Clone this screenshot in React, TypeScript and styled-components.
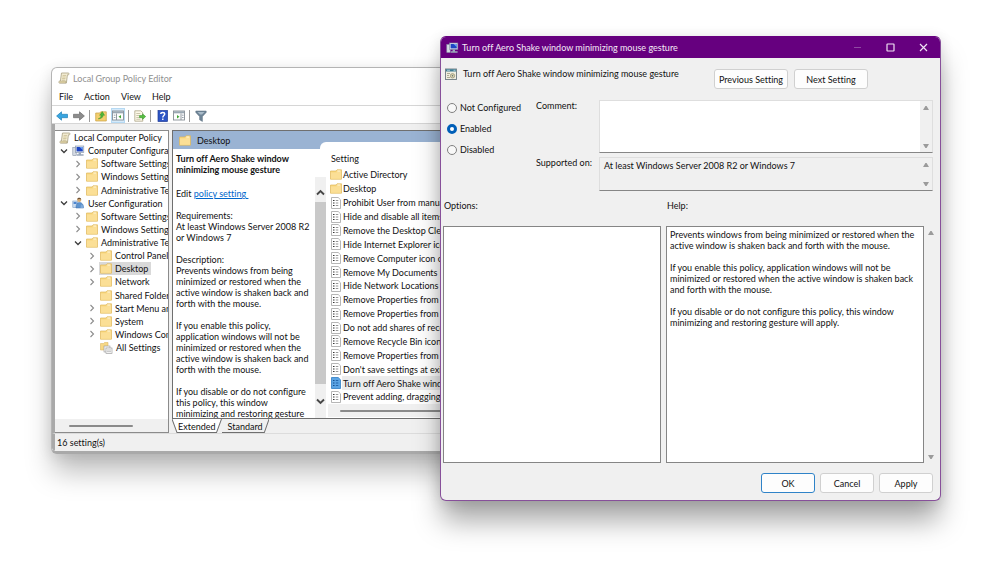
import React from 'react';
import styled, { createGlobalStyle } from 'styled-components';

const Global = createGlobalStyle`
  * { box-sizing: border-box; }
  body {
    margin: 0;
    background: #ffffff;
    color: #111111;
    font-family: Lato, "Open Sans", sans-serif;
    font-size: 9px;
    line-height: 11px;
    font-variant-ligatures: none;
    overflow: hidden;
  }
  button, textarea { font: inherit; font-variant-ligatures: none; color: inherit; }
  ul, h1, h2, p { margin: 0; padding: 0; list-style: none; font-size: inherit; font-weight: inherit; }
`;

const Desktop = styled.main`
  position: relative;
  min-height: 100vh;
`;

/* ---------- Group Policy Editor window ---------- */

const EditorWindow = styled.section`
  position: absolute;
  top: 67px;
  left: 51px;
  right: 20%;
  display: flex;
  flex-direction: column;
  background: #ffffff;
  border: 1px solid #b4b4b4;
  border-bottom: 3px solid #a9a9a9;
  border-radius: 6px;
  overflow: hidden;
  box-shadow: 0 20px 28px -2px rgba(0, 0, 0, 0.26), 0 2px 14px rgba(0, 0, 0, 0.1);
`;

const EditorTitle = styled.header`
  display: flex;
  align-items: center;
  gap: 3px;
  height: 20px;
  padding-left: 6px;
  color: #909090;
`;

const MenuBar = styled.nav`
  display: flex;
  height: 18px;
  padding-left: 7px;
  gap: 11px;
  border-bottom: 1px solid #d6d6d6;
`;

const MenuItem = styled.button`
  padding: 0;
  border: 0;
  background: none;
`;

const Toolbar = styled.div`
  display: flex;
  align-items: center;
  gap: 3px;
  height: 18px;
  padding: 2px 3px 0;
  border-bottom: 1px solid #d6d6d6;
`;

const ToolButton = styled.button<{ $on?: boolean }>`
  display: grid;
  place-items: center;
  width: 14px;
  height: 15px;
  padding: 0;
  border: 1px solid ${p => (p.$on ? '#b5d9f3' : 'transparent')};
  background: ${p => (p.$on ? '#d5eafa' : 'none')};
`;

const ToolDivider = styled.span`
  width: 1px;
  height: 12px;
  margin-right: 1px;
  background: #9b9b9b;
`;

const EditorBody = styled.div`
  display: flex;
  gap: 3px;
  height: 309px;
  padding-top: 6px;
  border-left: 3px solid #a9a9a9;
  background: #f0f0f0;
`;

const TreePane = styled.div`
  flex: 0 0 114px;
  display: flex;
  flex-direction: column;
  justify-content: space-between;
  overflow: hidden;
  background: #ffffff;
  border: solid #8b8b8b;
  border-width: 1px 1px 1px 0;
`;

const TreeList = styled.ul`
  display: flex;
  flex-direction: column;
  height: 223px;
`;

const TreeRow = styled.li<{ $depth: number }>`
  flex: 1;
  display: flex;
  align-items: center;
  gap: 3px;
  padding-left: ${p => (p.$depth === 0 ? 3 : p.$depth * 14 - 9)}px;
  white-space: nowrap;
`;

const Twisty = styled.span`
  display: flex;
  flex: none;
  width: 8px;
`;

const TreeLabel = styled.span<{ $selected?: boolean }>`
  display: flex;
  align-items: center;
  gap: 3px;
  height: 13px;
  padding: 0 3px 0 1px;
  background: ${p => (p.$selected ? '#d9d9d9' : 'none')};
  svg { flex: none; }
`;

const ScrollTrack = styled.div<{ $inset: number }>`
  display: flex;
  align-items: center;
  height: 13px;
  flex: none;
  padding-left: ${p => p.$inset}px;
  background: #f0f0f0;
`;

const ScrollLine = styled.span<{ $long?: boolean }>`
  width: ${p => (p.$long ? '80%' : '64px')};
  height: 2px;
  border-radius: 1px;
  background: #8a8a8a;
`;

const ResultPane = styled.div`
  flex: 1;
  min-width: 0;
  display: flex;
  flex-direction: column;
`;

const ResultView = styled.div`
  height: 289px;
  display: flex;
  flex-direction: column;
  border: solid #6f6f6f;
  border-width: 1px 0 1px 1px;
  background: #9ab3d3;
`;

const ResultTitle = styled.h2`
  flex: none;
  display: flex;
  align-items: center;
  gap: 6px;
  height: 18px;
  padding-left: 6px;
`;

const ResultColumns = styled.div`
  flex: 1;
  min-height: 0;
  display: flex;
  align-items: stretch;
  background: #ffffff;
`;

const Detail = styled.article`
  flex: 0 0 142px;
  padding: 4px 0 0 3px;
  overflow: hidden;
  white-space: pre;
  h2 { font-weight: 700; margin-bottom: 13px; }
  p { margin-bottom: 11px; }
`;

const PolicyLink = styled.a`
  color: #0066cc;
  text-decoration: underline;
`;

const VScroll = styled.div`
  position: relative;
  z-index: 1;
  flex: 0 0 11px;
  display: flex;
  flex-direction: column;
  margin-top: 28px;
  background: #f0f0f0;
`;

const ScrollButton = styled.button<{ $down?: boolean }>`
  display: grid;
  place-items: center;
  flex: none;
  height: ${p => (p.$down ? 34 : 25)}px;
  padding: ${p => (p.$down ? 0 : 5)}px 0 0;
  border: 0;
  background: none;
`;

const VThumb = styled.span`
  flex: 1;
  background: #c9c9c9;
`;

const SettingsCard = styled.div`
  flex: 1;
  min-width: 0;
  display: flex;
  flex-direction: column;
  margin: -7px 0 0 -6px;
  padding-left: 8px;
  background: #ffffff;
  border-top-left-radius: 6px;
`;

const SettingsHead = styled.h2`
  padding: 11px 0 4px 3px;
`;

const SettingsList = styled.ul`
  flex: none;
  display: flex;
  flex-direction: column;
  height: 236px;
`;

const SettingRow = styled.li<{ $selected?: boolean }>`
  flex: 1;
  display: flex;
  align-items: center;
  gap: 1px;
  padding-left: 2px;
  white-space: nowrap;
  background: linear-gradient(to right, transparent 14px, ${p => (p.$selected ? '#ececec' : 'transparent')} 14px);
  svg { flex: none; }
`;

const TabStrip = styled.div`
  display: flex;
  flex: 1;
`;

const TabButton = styled.button`
  position: relative;
  display: flex;
  align-items: center;
  padding: 0 6px;
  border: 0;
  background: none;
  svg { position: absolute; inset: 0; width: 100%; height: 100%; }
  span { position: relative; }
`;

const StatusBar = styled.footer`
  height: 18px;
  padding: 3px 0 0 2px;
  border-top: 1px solid #dcdcdc;
  border-left: 3px solid #a9a9a9;
  background: #f0f0f0;
`;

/* ---------- Policy dialog ---------- */

const Dialog = styled.section`
  position: absolute;
  top: 36px;
  left: 44%;
  right: 59px;
  background: #f0f0f0;
  border: 1px solid #87509a;
  border-top-color: #66007f;
  border-radius: 6px;
  overflow: hidden;
  box-shadow: 0 22px 28px -2px rgba(0, 0, 0, 0.34), 0 2px 14px rgba(0, 0, 0, 0.12);
`;

const DialogTitle = styled.header`
  display: flex;
  align-items: center;
  height: 21px;
  padding-left: 5px;
  color: #f4eaf6;
  background: #66007f;
  h1 { flex: 1; margin-left: 3px; }
`;

const CaptionButton = styled.button`
  display: grid;
  place-items: center;
  width: 33px;
  height: 21px;
  padding: 0;
  border: 0;
  background: none;
`;

const DialogBody = styled.form`
  padding: 0 7px 7px 2px;
`;

const NameRow = styled.div`
  display: flex;
  gap: 6px;
  height: 42px;
  padding: 10px 65px 11px 2px;
  h2 { flex: 1; }
`;

const PushButton = styled.button<{ $wide?: boolean; $primary?: boolean }>`
  align-self: flex-end;
  width: ${p => (p.$wide ? 74 : 54)}px;
  height: 20px;
  padding: 0;
  border: 1px solid ${p => (p.$primary ? '#2f83c8' : '#d0d0d0')};
  border-radius: 3px;
  background: #fdfdfd;
`;

const StateRow = styled.div`
  display: grid;
  grid-template-columns: 93px 63px 1fr;
`;

const RadioGroup = styled.div`
  display: flex;
  flex-direction: column;
  gap: 10px;
  padding: 2px 0 0 4px;
`;

const RadioLabel = styled.label`
  display: flex;
  align-items: center;
  gap: 3px;
`;

const Radio = styled.input`
  appearance: none;
  width: 10px;
  height: 10px;
  margin: 0;
  border: 1px solid #808080;
  border-radius: 50%;
  background: #f8f8f8;
  &:checked { border: 3px solid #005fb8; background: #ffffff; }
`;

const FieldStack = styled.div`
  display: flex;
  flex-direction: column;
  gap: 4px;
`;

const FieldLabels = styled.div`
  display: flex;
  flex-direction: column;
  gap: 46px;
`;

const Field = styled.div<{ $readOnly?: boolean }>`
  display: flex;
  height: ${p => (p.$readOnly ? 34 : 53)}px;
  border: 1px solid #dedede;
  border-bottom-color: #868686;
  background: ${p => (p.$readOnly ? '#f0f0f0' : '#ffffff')};
  textarea {
    flex: 1;
    min-width: 0;
    padding: 2px 4px;
    border: 0;
    outline: 0;
    resize: none;
    overflow: hidden;
    background: none;
  }
`;

const ArrowRail = styled.div`
  flex: none;
  display: flex;
  flex-direction: column;
  justify-content: space-between;
  align-items: center;
  width: 12px;
  padding: 4px 0 3px;
  background: #f0f0f0;
`;

const ArrowButton = styled.button`
  display: flex;
  padding: 0;
  border: 0;
  background: none;
`;

const PanelGrid = styled.div`
  display: grid;
  grid-template-columns: 218px 1fr 4px;
  column-gap: 5px;
  row-gap: 15px;
  padding-top: 9px;
  & > ${ArrowRail} { margin-left: -4px; }
`;

const PanelLabel = styled.h2`
  padding-left: 1px;
`;

const Panel = styled.div`
  height: 237px;
  padding: 2px 3px;
  border: 1px solid #858585;
  background: #ffffff;
  white-space: pre-line;
  p { margin-bottom: 11px; }
`;

const ButtonRow = styled.div`
  display: flex;
  justify-content: flex-end;
  gap: 5px;
  padding-top: 10px;
`;

/* ---------- Icons ---------- */

const FolderIcon = () => (
  <svg width="12" height="11" viewBox="0 0 12 11">
    <path d="M.5 2h5.500l1-1.200h4.500v9.400H.5z" fill="#f8d77f" stroke="#dfb75c" strokeWidth=".7" />
    <path d="M1 3.600h5.600l1.200-1.200H11v7.400H1z" fill="#fbdf96" />
    <path d="M7.300 2h3" stroke="#fff9e6" strokeWidth="1" />
  </svg>
);

const ScrollIcon = () => (
  <svg width="12" height="12" viewBox="0 0 12 12">
    <path d="M3.500 1h6.800c.8 0 1.200 1.600 0 1.800H9.400L8.400 11H1.600c-1.200 0-1-1.900 0-1.900h.8z" fill="#f5efd6" stroke="#a89f80" strokeWidth=".8" />
    <path d="M4.600 3.400h3.400M4.300 5h3.400M4.100 6.600h3.400M3.900 8.200h3" stroke="#b9a873" strokeWidth=".6" />
    <path d="M1.600 11h6.600c-.8-.5-.7-1.500 0-1.900H2" fill="#e2d5a5" stroke="#a89f80" strokeWidth=".5" />
  </svg>
);

const ComputerIcon = () => (
  <svg width="13" height="12" viewBox="0 0 13 12">
    <rect x=".8" y="2.500" width="3.400" height="8" fill="#d5dbe4" stroke="#8592a5" strokeWidth=".6" />
    <rect x="3.600" y="1" width="8.200" height="6.400" fill="#dfe5ee" stroke="#7f8ea3" strokeWidth=".6" />
    <rect x="4.600" y="2" width="6.200" height="4.400" fill="#1d45c4" />
    <path d="M7.500 2h3.300v3z" fill="#6fa2f3" />
    <path d="M6.600 7.400h2.400v1.800h2.600v1.500H4.800V9.200h1.800z" fill="#9aa8bb" />
  </svg>
);

const UserIcon = () => (
  <svg width="13" height="12" viewBox="0 0 13 12">
    <rect x=".8" y="4" width="4.600" height="6.500" fill="#c9dcf1" stroke="#7c9cc4" strokeWidth=".6" />
    <rect x="1.600" y="5" width="3" height="2" fill="#4d86cf" />
    <circle cx="7.200" cy="3" r="2.100" fill="#d6ab72" />
    <path d="M5.200 2.600c0-2.600 4-2.600 4 0-1.200-.9-2.600-.8-4 0z" fill="#6b4f33" />
    <path d="M4 11c0-4 1.500-5.500 3.500-5.500S11.500 7 11.500 11z" fill="#5c93cf" stroke="#3c6ca8" strokeWidth=".5" />
    <path d="M9 7.500l3 1.500-.6 2H8.500z" fill="#7fa9d8" />
  </svg>
);

const AllSettingsIcon = () => (
  <svg width="13" height="12" viewBox="0 0 13 12">
    <path d="M.5 1.500h3.200l.8-1H8v7.500H.5z" fill="#f7d885" stroke="#dcb968" strokeWidth=".6" />
    <rect x="4" y="4" width="6" height="6" fill="#f1f1f1" stroke="#9a9a9a" strokeWidth=".6" />
    <rect x="6" y="6" width="6" height="5.500" fill="#fdfdfd" stroke="#8f8f8f" strokeWidth=".6" />
    <path d="M7 8h4M7 9.700h4" stroke="#a5a5a5" strokeWidth=".7" />
  </svg>
);

const SettingIcon = ({ active }: { active?: boolean }) => (
  <svg width="12" height="12" viewBox="-1 0 12 12">
    <path d="M.5.5h6.700l2.300 2.300v8.700h-9z" fill={active ? '#5ba4e4' : '#ffffff'} stroke={active ? '#2f7cc4' : '#a3a3a3'} strokeWidth=".8" />
    <path d="M2 3.500h1.500M2 6h1.500M2 8.500h1.500" stroke={active ? '#174f8c' : '#333333'} strokeWidth="1.200" />
    <path d="M4.800 3.500h2.500M4.800 6h2.500M4.800 8.500h2.500" stroke={active ? '#1d5fa5' : '#8b8b8b'} strokeWidth=".9" />
  </svg>
);

const PolicyIcon = () => (
  <svg width="12" height="12" viewBox="0 0 12 12">
    <rect x=".5" y="1" width="11" height="10.500" fill="#f0eedf" stroke="#6d7a80" strokeWidth=".9" />
    <rect x="1" y="1.200" width="10" height="2.300" fill="#3e7c93" />
    <path d="M2 2.300h3M8.500 2.300h2" stroke="#d9ecf2" strokeWidth=".7" />
    <path d="M2 5.500h3M2 7.500h2M2 9.500h3" stroke="#9a9a80" strokeWidth=".8" />
    <circle cx="7.500" cy="7.800" r="2.200" fill="#d9d3ae" stroke="#8c8a70" strokeWidth=".7" />
    <circle cx="7.500" cy="7.800" r=".7" fill="#5b6b6e" />
  </svg>
);

const Chevron = ({ open }: { open?: boolean }) => (
  <svg width="8" height="8" viewBox="0 0 8 8" fill="none">
    {open
      ? <path d="M1 2.500l3 3 3-3" stroke="#3c3c3c" strokeWidth="1.300" />
      : <path d="M2.500 1l3 3-3 3" stroke="#8c8c8c" strokeWidth="1.100" />}
  </svg>
);

const ScrollChevron = ({ down }: { down?: boolean }) => (
  <svg width="9" height="7" viewBox="0 0 9 7" fill="none">
    <path d={down ? 'M1 1.500l3.500 3.500L8 1.500' : 'M1 5.500L4.500 2 8 5.500'} stroke="#484848" strokeWidth="1.900" />
  </svg>
);

const Triangle = ({ down }: { down?: boolean }) => (
  <svg width="8" height="6" viewBox="0 0 8 6">
    <path d={down ? 'M1 1h6L4.600 5H3.400z' : 'M1 5h6L4.600 1H3.400z'} fill="#9b9b9b" />
  </svg>
);

const ArrowIcon = ({ back }: { back?: boolean }) => (
  <svg width="12" height="10" viewBox="0 0 12 10">
    <path
      d={back ? 'M.6 5L5.500.8v2.500h6v3.400h-6v2.500z' : 'M11.400 5L6.500.8v2.500h-6v3.400h6v2.500z'}
      fill={back ? '#38a5e0' : '#8c8c8c'}
      stroke={back ? '#2181b9' : '#6f6f6f'}
      strokeWidth=".7"
    />
  </svg>
);

const FolderUpIcon = () => (
  <svg width="12" height="12" viewBox="0 0 12 12">
    <path d="M.7 3h4l1-1.200h5.600V11H.7z" fill="#f3cf6f" stroke="#c99f43" strokeWidth=".7" />
    <path d="M3.200 8.800c1.800-.5 2.700-1.700 2.900-3.500H4.600L7.300 1.600l2.300 3.700H8.200C8 7.600 6 9 3.200 8.800z" fill="#4fb53a" stroke="#2f8a22" strokeWidth=".4" />
  </svg>
);

const PanelsIcon = ({ right }: { right?: boolean }) => (
  <svg width="12" height="11" viewBox="0 0 12 11">
    <rect x=".5" y="1" width="11" height="9" fill="#fdfdfd" stroke="#868e96" strokeWidth=".9" />
    <rect x="1" y="1.300" width="10" height="2" fill="#9aa7b3" />
    <path d={right ? 'M8 3.500V10' : 'M4.500 3.500V10'} stroke="#868e96" strokeWidth=".9" />
    <path d={right ? 'M4 5l2.500 1.800L4 8.600z' : 'M9 5L6.500 6.800 9 8.600z'} fill="#3fa535" />
    <path d={right ? 'M9 5.200h1.600M9 7.500h1.600' : 'M1.800 5.200h1.600M1.800 7.500h1.600'} stroke="#7e8b99" strokeWidth=".8" />
  </svg>
);

const ExportIcon = () => (
  <svg width="12" height="12" viewBox="0 0 12 12">
    <path d="M.8.8h6l2 2v8.400h-8z" fill="#fbf8e8" stroke="#a39a78" strokeWidth=".7" />
    <path d="M2.300 3.500h4M2.300 5.500h3M2.300 7.500h3M2.300 9.300h4" stroke="#b7b091" strokeWidth=".7" />
    <path d="M5.500 5.500h3V3.800L11.700 6.600 8.500 9.400V7.700h-3z" fill="#56bf41" stroke="#2f8f25" strokeWidth=".5" />
  </svg>
);

const HelpIcon = () => (
  <svg width="11" height="12" viewBox="0 0 11 12" fill="none">
    <rect x="1" y=".5" width="9.500" height="11" fill="#2d55c5" stroke="#1d3a94" strokeWidth=".7" />
    <path d="M3.800 4.100c0-2.200 3.900-2.200 3.900 0 0 1.500-1.900 1.500-1.900 3.300M5.800 8.600v1.400" stroke="#ffffff" strokeWidth="1.400" />
  </svg>
);

const FunnelIcon = () => (
  <svg width="12" height="12" viewBox="0 0 12 12">
    <path d="M.8 1h10.400v1.400L7.400 6.600v4.800l-2.800-1.600V6.600L.8 2.400z" fill="#6f8597" stroke="#566b7d" strokeWidth=".5" />
    <path d="M2.500 2h7L7 4.500H5z" fill="#a8bac8" />
  </svg>
);

/* ---------- Data ---------- */

type Node = { label: string; depth: number; open?: boolean; leaf?: boolean; icon?: React.ReactNode; selected?: boolean };

const tree: Node[] = [
  { label: 'Computer Configuration', depth: 1, open: true, icon: <ComputerIcon /> },
  { label: 'Software Settings', depth: 2 },
  { label: 'Windows Settings', depth: 2 },
  { label: 'Administrative Templates', depth: 2 },
  { label: 'User Configuration', depth: 1, open: true, icon: <UserIcon /> },
  { label: 'Software Settings', depth: 2 },
  { label: 'Windows Settings', depth: 2 },
  { label: 'Administrative Templates', depth: 2, open: true },
  { label: 'Control Panel', depth: 3 },
  { label: 'Desktop', depth: 3, selected: true },
  { label: 'Network', depth: 3 },
  { label: 'Shared Folders', depth: 3, leaf: true },
  { label: 'Start Menu and Taskbar', depth: 3 },
  { label: 'System', depth: 3 },
  { label: 'Windows Components', depth: 3 },
  { label: 'All Settings', depth: 3, leaf: true, icon: <AllSettingsIcon /> },
];

const folders = ['Active Directory', 'Desktop'];

const settings = [
  'Prohibit User from manually redirecting Profile Folders',
  'Hide and disable all items on the desktop',
  'Remove the Desktop Cleanup Wizard',
  'Hide Internet Explorer icon on desktop',
  'Remove Computer icon on the desktop',
  'Remove My Documents icon on the desktop',
  'Hide Network Locations icon on desktop',
  'Remove Properties from the Computer icon context menu',
  'Remove Properties from the Documents icon context menu',
  'Do not add shares of recently opened documents',
  'Remove Recycle Bin icon from desktop',
  'Remove Properties from the Recycle Bin context menu',
  "Don't save settings at exit",
  'Turn off Aero Shake window minimizing mouse gesture',
  'Prevent adding, dragging, dropping and closing toolbars',
];

const ACTIVE = 'Turn off Aero Shake window minimizing mouse gesture';

const Rail = () => (
  <ArrowRail>
    <ArrowButton type="button" aria-label="Scroll up"><Triangle /></ArrowButton>
    <ArrowButton type="button" aria-label="Scroll down"><Triangle down /></ArrowButton>
  </ArrowRail>
);

const Editor = () => (
  <EditorWindow>
    <EditorTitle><ScrollIcon /><h1>Local Group Policy Editor</h1></EditorTitle>
    <MenuBar>
      {['File', 'Action', 'View', 'Help'].map(m => <MenuItem key={m}>{m}</MenuItem>)}
    </MenuBar>
    <Toolbar>
      <ToolButton aria-label="Back"><ArrowIcon back /></ToolButton>
      <ToolButton aria-label="Forward"><ArrowIcon /></ToolButton>
      <ToolDivider />
      <ToolButton aria-label="Up one level"><FolderUpIcon /></ToolButton>
      <ToolButton aria-label="Show console tree" $on><PanelsIcon /></ToolButton>
      <ToolDivider />
      <ToolButton aria-label="Export list"><ExportIcon /></ToolButton>
      <ToolDivider />
      <ToolButton aria-label="Help topics"><HelpIcon /></ToolButton>
      <ToolButton aria-label="Show action pane"><PanelsIcon right /></ToolButton>
      <ToolDivider />
      <ToolButton aria-label="Filter"><FunnelIcon /></ToolButton>
    </Toolbar>
    <EditorBody>
      <TreePane>
        <TreeList>
          <TreeRow $depth={0}>
            <TreeLabel><ScrollIcon />Local Computer Policy</TreeLabel>
          </TreeRow>
          {tree.map((n, i) => (
            <TreeRow key={i} $depth={n.depth}>
              <Twisty>{!n.leaf && <Chevron open={n.open} />}</Twisty>
              <TreeLabel $selected={n.selected}>{n.icon ?? <FolderIcon />}{n.label}</TreeLabel>
            </TreeRow>
          ))}
        </TreeList>
        <ScrollTrack $inset={14}><ScrollLine /></ScrollTrack>
      </TreePane>
      <ResultPane>
        <ResultView>
          <ResultTitle><FolderIcon />Desktop</ResultTitle>
          <ResultColumns>
            <Detail>
              <h2>{'Turn off Aero Shake window\nminimizing mouse gesture'}</h2>
              <p>Edit <PolicyLink href="#policy">policy setting </PolicyLink></p>
              <p>{'Requirements:\nAt least Windows Server 2008 R2\nor Windows 7'}</p>
              <p>{'Description:\nPrevents windows from being\nminimized or restored when the\nactive window is shaken back and\nforth with the mouse.'}</p>
              <p>{'If you enable this policy,\napplication windows will not be\nminimized or restored when the\nactive window is shaken back and\nforth with the mouse.'}</p>
              <p>{'If you disable or do not configure\nthis policy, this window\nminimizing and restoring gesture'}</p>
            </Detail>
            <VScroll>
              <ScrollButton aria-label="Scroll up"><ScrollChevron /></ScrollButton>
              <VThumb />
              <ScrollButton aria-label="Scroll down" $down><ScrollChevron down /></ScrollButton>
            </VScroll>
            <SettingsCard>
              <SettingsHead>Setting</SettingsHead>
              <SettingsList>
                {folders.map(f => <SettingRow key={f}><FolderIcon />{f}</SettingRow>)}
                {settings.map(s => (
                  <SettingRow key={s} $selected={s === ACTIVE}>
                    <SettingIcon active={s === ACTIVE} />{s}
                  </SettingRow>
                ))}
              </SettingsList>
              <ScrollTrack $inset={12}><ScrollLine $long /></ScrollTrack>
            </SettingsCard>
          </ResultColumns>
        </ResultView>
        <TabStrip>
          <TabButton>
            <svg viewBox="0 0 50 13" preserveAspectRatio="none" fill="#ffffff" stroke="#6f6f6f">
              <path d="M0 0l5 12.500h40L50 0" />
            </svg>
            <span>Extended</span>
          </TabButton>
          <TabButton>
            <svg viewBox="0 0 50 13" preserveAspectRatio="none" fill="none" stroke="#6f6f6f">
              <path d="M-4 12.500h49L50 0" />
            </svg>
            <span>Standard</span>
          </TabButton>
        </TabStrip>
      </ResultPane>
    </EditorBody>
    <StatusBar>16 setting(s)</StatusBar>
  </EditorWindow>
);

const PolicyDialog = () => (
  <Dialog>
    <DialogTitle>
      <ComputerIcon />
      <h1>{ACTIVE}</h1>
      <CaptionButton aria-label="Minimize">
        <svg width="9" height="9" viewBox="0 0 9 9"><path d="M1 4.500h7" stroke="#8f4aa2" /></svg>
      </CaptionButton>
      <CaptionButton aria-label="Maximize">
        <svg width="9" height="9" viewBox="0 0 9 9" fill="none"><rect x="1" y="1" width="7" height="7" rx=".5" stroke="#f0e2f4" strokeWidth="1.200" /></svg>
      </CaptionButton>
      <CaptionButton aria-label="Close">
        <svg width="9" height="9" viewBox="0 0 9 9"><path d="M1 1l7 7M8 1L1 8" stroke="#f0e2f4" strokeWidth="1.200" /></svg>
      </CaptionButton>
    </DialogTitle>
    <DialogBody onSubmit={e => e.preventDefault()}>
      <NameRow>
        <PolicyIcon />
        <h2>{ACTIVE}</h2>
        <PushButton type="button" $wide>Previous Setting</PushButton>
        <PushButton type="button" $wide>Next Setting</PushButton>
      </NameRow>
      <StateRow>
        <RadioGroup>
          {['Not Configured', 'Enabled', 'Disabled'].map(s => (
            <RadioLabel key={s}>
              <Radio type="radio" name="state" defaultChecked={s === 'Enabled'} />
              {s}
            </RadioLabel>
          ))}
        </RadioGroup>
        <FieldLabels>
          <label htmlFor="comment">Comment:</label>
          <label htmlFor="supported">Supported on:</label>
        </FieldLabels>
        <FieldStack>
          <Field><textarea id="comment" /><Rail /></Field>
          <Field $readOnly>
            <textarea id="supported" readOnly value="At least Windows Server 2008 R2 or Windows 7" />
            <Rail />
          </Field>
        </FieldStack>
      </StateRow>
      <PanelGrid>
        <PanelLabel>Options:</PanelLabel>
        <PanelLabel>Help:</PanelLabel>
        <span />
        <Panel />
        <Panel>
          <p>{'Prevents windows from being minimized or restored when the\nactive window is shaken back and forth with the mouse.'}</p>
          <p>{'If you enable this policy, application windows will not be\nminimized or restored when the active window is shaken back\nand forth with the mouse.'}</p>
          <p>{'If you disable or do not configure this policy, this window\nminimizing and restoring gesture will apply.'}</p>
        </Panel>
        <Rail />
      </PanelGrid>
      <ButtonRow>
        <PushButton type="submit" $primary>OK</PushButton>
        <PushButton type="button">Cancel</PushButton>
        <PushButton type="button">Apply</PushButton>
      </ButtonRow>
    </DialogBody>
  </Dialog>
);

export default function App() {
  return (
    <>
      <Global />
      <Desktop>
        <Editor />
        <PolicyDialog />
      </Desktop>
    </>
  );
}
